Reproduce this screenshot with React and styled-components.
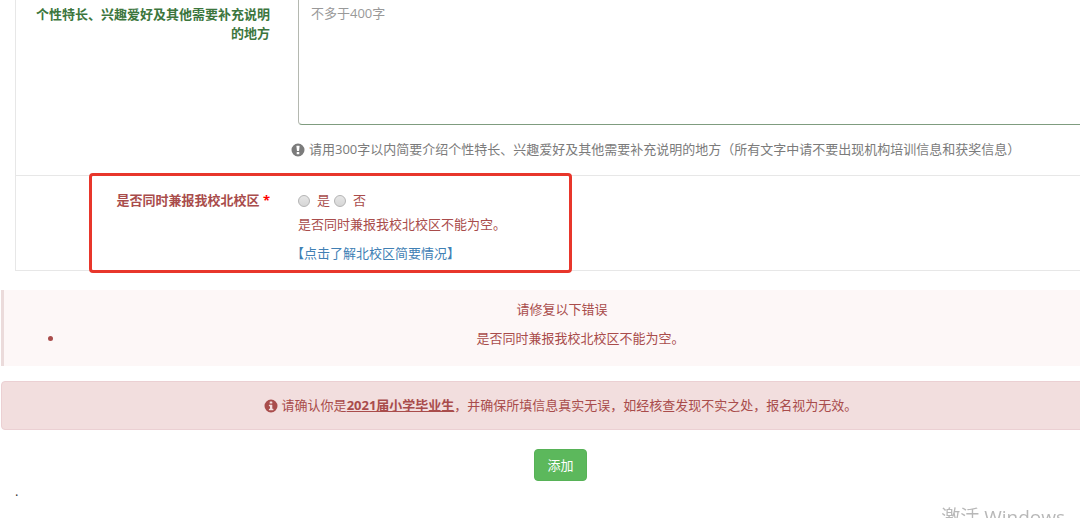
import React from 'react';
import styled, { createGlobalStyle, ThemeProvider } from 'styled-components';

const theme = {
  danger: '#a94c4b',
  success: '#3c763d',
  muted: '#7b7b7b',
  link: '#4080b4',
  line: '#e7e7e7',
};

const GlobalStyle = createGlobalStyle`
  * {
    box-sizing: border-box;
  }
  body {
    margin: 0;
    overflow: hidden;
    background: #fff;
    color: #333;
    font-family: "Open Sans", "Noto Sans CJK SC", sans-serif;
    font-size: 13px;
    line-height: 19px;
  }
`

/* The form is a little wider than the window and is scrolled down */
const Page = styled.form`
  width: calc(100% + 40px);
  margin-top: -19px;
  padding-left: 1px;
`
const Fields = styled.div`
  margin: 0 14px 19px 14px;
  border: 1px solid ${props => props.theme.line};
`
const Row = styled.div`
  position: relative;
  display: grid;
  grid-template-columns: 240px 1fr;
  column-gap: 21px;
  padding: ${props => props.$padding};
  color: ${props => props.theme[props.$state]};
  & + & {
    border-top: 1px solid ${props => props.theme.line};
  }
`
const Label = styled.div`
  padding-top: 8px;
  font-weight: bold;
  text-align: right;
`
const Required = styled.span`
  color: #f00;
`
const Control = styled.div`
  padding-left: 7px;
`
const TextArea = styled.textarea`
  display: block;
  width: 100%;
  height: 128px;
  padding: 6px 12px;
  border: 1px solid ${props => props.theme.success};
  border-color: #7f9c7f #b4b8b0;
  border-radius: 4px;
  background: #fff;
  font: inherit;
  resize: none;
  &::placeholder {
    color: #999;
    opacity: 1;
  }
`
const Hint = styled.p`
  display: flex;
  align-items: center;
  gap: 4px;
  margin: 15px 0 0 0;
  color: ${props => props.theme.muted};
`
const Icon = styled.svg`
  flex: none;
  width: 14px;
  height: 14px;
  fill: currentColor;
`
const RadioGroup = styled.div`
  display: flex;
  padding-top: 8px;
`
const RadioLabel = styled.label`
  display: flex;
  align-items: center;
  gap: 7px;
  margin-right: 4px;
`
const Radio = styled.input`
  appearance: none;
  width: 12px;
  height: 12px;
  margin: 0;
  border: 1px solid #b4b4b4;
  border-radius: 50%;
  background: linear-gradient(#e6e6e6, #d6d6d6);
  &:checked {
    background: radial-gradient(#555 35%, #ddd 40%);
  }
`
const FieldError = styled.div`
  margin: 5px 0 10px 0;
`
const Link = styled.a`
  color: ${props => props.theme.link};
  text-decoration: none;
`
const Highlight = styled.div`
  position: absolute;
  top: -3px;
  bottom: -3px;
  left: 73px;
  width: 483px;
  border: 3px solid #e8362b;
  border-radius: 4px;
  pointer-events: none;
`
const ErrorSummary = styled.div`
  margin-bottom: 15px;
  padding: 10px 15px 18px 15px;
  border-left: 3px solid #ebdbdb;
  background: #fdf7f7;
  color: ${props => props.theme.danger};
  text-align: center;
  p {
    margin: 0 0 10px 0;
  }
  ul {
    margin: 0;
    padding: 0 8px 0 45px;
  }
`
const Alert = styled.div`
  display: flex;
  align-items: center;
  justify-content: center;
  gap: 4px;
  margin-bottom: 19px;
  padding: 14px;
  border: 1px solid #ebd0d3;
  border-radius: 4px;
  background: #f2dede;
  color: ${props => props.theme.danger};
`
const Actions = styled.div`
  text-align: center;
`
const SubmitButton = styled.button`
  height: 32px;
  padding: 0 12px;
  border: 1px solid #57b257;
  border-radius: 4px;
  background: #5cb85c;
  color: #fff;
  font: inherit;
`
const Footer = styled.footer`
  padding: 1px 14px;
`
const Watermark = styled.div`
  position: fixed;
  right: 15px;
  bottom: -12px;
  color: #b8b8b8;
  font-size: 19px;
  line-height: 26px;
`

const ExclamationIcon = () => (
  <Icon viewBox="0 0 14 14" aria-hidden="true">
    <path fillRule="evenodd" d="M7 .5a6.5 6.5 0 1 0 0 13a6.5 6.5 0 0 0 0-13zM5.7 2.8h2.6q.3 0 .3.3l-.5 4.500q0 .3-.3.3H6.200q-.3 0-.3-.3L5.400 3.100q0-.3.3-.3zM6 9h2q.3 0 .3.3v1.600q0 .3-.3.3H6q-.3 0-.3-.3V9.300q0-.3.3-.3z" />
  </Icon>
);

const InfoIcon = () => (
  <Icon viewBox="0 0 14 14" aria-hidden="true">
    <path fillRule="evenodd" d="M7 .5a6.500 6.500 0 1 0 0 13a6.500 6.500 0 0 0 0-13zM6 2.600h2q.3 0 .3.3v1.400q0 .3-.3.3H6q-.3 0-.3-.3V2.900q0-.3.3-.3zM5.200 5.700h2.800q.3 0 .3.3v3.800h.8q.3 0 .3.3v.9q0 .3-.3.3H5.200q-.3 0-.3-.3v-.9q0-.3.3-.3H6V7.200h-.8q-.3 0-.3-.3V6q0-.3.3-.3z" />
  </Icon>
);

const App = function() {
  return (
    <ThemeProvider theme={theme}>
      <GlobalStyle />
      <Page onSubmit={e => e.preventDefault()}>
        <Fields>
          <Row $state="success" $padding="15px 14px 16px 14px">
            <Label as="label" htmlFor="speciality">个性特长、兴趣爱好及其他需要补充说明的地方</Label>
            <div>
              <Control>
                <TextArea id="speciality" placeholder="不多于400字" />
              </Control>
              <Hint>
                <ExclamationIcon />
                请用300字以内简要介绍个性特长、兴趣爱好及其他需要补充说明的地方（所有文字中请不要出现机构培训信息和获奖信息）
              </Hint>
            </div>
          </Row>
          <Row $state="danger" $padding="7px 14px">
            <Label id="campus-label">是否同时兼报我校北校区 <Required>*</Required></Label>
            <div>
              <Control>
                <RadioGroup role="radiogroup" aria-labelledby="campus-label">
                  <RadioLabel><Radio type="radio" name="campus" value="1" />是</RadioLabel>
                  <RadioLabel><Radio type="radio" name="campus" value="0" />否</RadioLabel>
                </RadioGroup>
                <FieldError>是否同时兼报我校北校区不能为空。</FieldError>
              </Control>
              <Link href="#campus">【点击了解北校区简要情况】</Link>
            </div>
            <Highlight />
          </Row>
        </Fields>
        <ErrorSummary>
          <p>请修复以下错误</p>
          <ul>
            <li>是否同时兼报我校北校区不能为空。</li>
          </ul>
        </ErrorSummary>
        <Alert>
          <InfoIcon />
          <span>请确认你是<b><u>2021届小学毕业生</u></b>，并确保所填信息真实无误，如经核查发现不实之处，报名视为无效。</span>
        </Alert>
        <Actions>
          <SubmitButton type="submit">添加</SubmitButton>
        </Actions>
        <Footer>.</Footer>
      </Page>
      <Watermark>激活 Windows</Watermark>
    </ThemeProvider>
  );
};

export default App;
